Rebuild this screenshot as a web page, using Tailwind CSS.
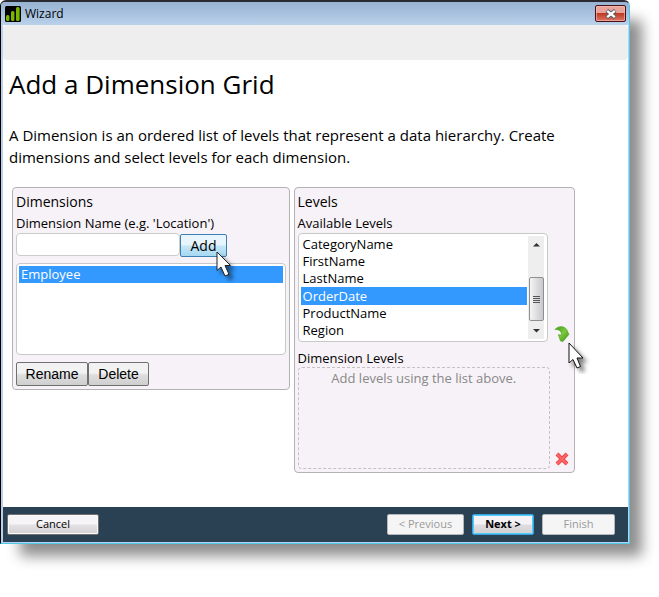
<!DOCTYPE html>
<html lang="en">
<head>
    <meta charset="UTF-8">
    <meta name="viewport" content="width=device-width, initial-scale=1.0">
    <title>Wizard</title>
    <script src="https://cdn.jsdelivr.net/npm/@tailwindcss/browser@4"></script>
</head>
<body class="bg-white min-h-screen flex flex-col pr-[29px] pb-[53px] font-['Open_Sans','Noto_Sans',sans-serif] text-black overflow-hidden">
    <div class="grow flex flex-col rounded-t-md border-l border-t-2 border-l-black border-t-[#2b2a33] border-r border-b border-r-[#4ccbe8] border-b-[#4ccbe8] bg-[#b9d1ee] shadow-[16px_16px_14px_-4px_rgba(0,0,0,0.45)]">
        <header class="h-[23px] shrink-0 flex items-center pl-1 pr-[3px] rounded-t bg-linear-to-b from-[#98b2d2] to-[#b9d1ea]">
            <svg class="w-4 h-4 shrink-0" viewBox="0 0 16 16">
                <rect width="16" height="16" rx="1.5" fill="#000"/>
                <rect x="1" y="9" width="3.4" height="6" rx="1.5" fill="#7ab800"/>
                <rect x="6" y="5" width="3.4" height="10" rx="1.5" fill="#7ab800"/>
                <rect x="11" y="1" width="3.6" height="14" rx="1.5" fill="#7ab800"/>
            </svg>
            <span class="ml-1 text-xs leading-4">Wizard</span>
            <button type="button" aria-label="Close" class="ml-auto w-[31px] h-[17px] flex items-center justify-center rounded-xs border border-[#43121c] bg-linear-to-b from-[#e8a49b] from-45% via-[#bf3a22] via-50% to-[#d97563] shadow-[inset_0_0_0_1px_rgba(255,190,180,0.6)]">
                <svg class="w-3 h-[10px]" viewBox="0 0 12 10" fill="none">
                    <path d="M1.8 1.4L10.2 8.6M10.2 1.4L1.8 8.6" stroke="#555a66" stroke-width="4"/>
                    <path d="M2.2 1.8L9.8 8.2M9.8 1.8L2.2 8.2" stroke="#fff" stroke-width="2.4"/>
                </svg>
            </button>
        </header>

        <div class="grow flex flex-col mx-[2px] mr-px mb-px bg-white">
            <div class="h-[35px] shrink-0 rounded bg-[#eeeeee]"></div>

            <main class="grow px-[6px] pt-[7px]">
                <h1 class="text-[26px] leading-[34px]">Add a Dimension Grid</h1>
                <p class="mt-[23px] text-[15px] leading-[22px]">A Dimension is an ordered list of levels that represent a data hierarchy. Create dimensions and select levels for each dimension.</p>

                <div class="mt-[19px] ml-[3px] mr-[47px] flex items-start gap-1">
                    <section class="flex-278 min-w-0 rounded border border-[#b5b2b5] bg-[#f7f2f7] px-[3px] pt-1 pb-[3px]">
                        <h2 class="text-sm leading-5">Dimensions</h2>
                        <label for="dimension-name" class="block mt-px text-[13px] leading-5">Dimension Name (e.g. 'Location')</label>
                        <div class="flex items-start">
                            <input id="dimension-name" type="text" class="w-[164px] h-[23px] px-1 text-[13px] rounded border border-[#cccccc] bg-white">
                            <div class="relative mt-px">
                                <button type="button" class="block w-[47px] h-[23px] rounded-xs border border-[#3c7fb1] text-sm leading-5 bg-linear-to-b from-[#e8f5fc] from-45% via-[#c4e5f6] via-55% to-[#a5d8f2]">Add</button>
                                <svg class="absolute left-9 top-[17px] w-6 h-8" viewBox="0 0 24 32">
                                    <path d="M1 1V19.5L5 16L9 25L13 23.3L9 14.5H14.5Z" fill="#fff" stroke="#222" class="drop-shadow-[4px_4px_2px_rgba(0,0,0,0.5)]"/>
                                </svg>
                            </div>
                        </div>
                        <ul role="listbox" aria-label="Dimensions" class="mt-[6px] h-[92px] rounded border border-[#c8c8c8] bg-white p-[2px]">
                            <li role="option" aria-selected="true" class="px-[2px] h-[17px] text-[13px] leading-[17px] bg-[#3399ff] text-white">Employee</li>
                        </ul>
                        <div class="mt-[7px] flex font-['Liberation_Sans',sans-serif] text-sm">
                            <button type="button" class="w-[72px] h-6 rounded-xs border border-[#707070] bg-linear-to-b from-[#f2f2f2] from-45% via-[#dddddd] via-55% to-[#cfcfcf]">Rename</button>
                            <button type="button" class="w-[61px] h-6 rounded-xs border border-[#707070] bg-linear-to-b from-[#f2f2f2] from-45% via-[#dddddd] via-55% to-[#cfcfcf]">Delete</button>
                        </div>
                    </section>

                    <section class="flex-281 min-w-0 rounded border border-[#b5b2b5] bg-[#f7f2f7] pl-[3px] pr-1 pt-1 pb-[3px]">
                        <h2 class="text-sm leading-5">Levels</h2>
                        <h3 class="mt-px text-[13px] leading-5">Available Levels</h3>
                        <div class="flex items-end gap-[6px]">
                            <div class="grow h-[109px] flex rounded border border-[#c8c8c8] bg-white p-[2px] pr-[3px]">
                                <ul role="listbox" aria-label="Available Levels" class="grow text-[13px] leading-[17px]">
                                    <li role="option" class="px-[2px]">CategoryName</li>
                                    <li role="option" class="px-[2px]">FirstName</li>
                                    <li role="option" class="px-[2px]">LastName</li>
                                    <li role="option" aria-selected="true" class="px-[2px] leading-[18px] bg-[#3399ff] text-white">OrderDate</li>
                                    <li role="option" class="px-[2px]">ProductName</li>
                                    <li role="option" class="px-[2px]">Region</li>
                                </ul>
                                <div class="w-4 ml-px flex flex-col items-center bg-[#eeeeee]">
                                    <svg class="w-4 h-[17px]" viewBox="0 0 16 17"><path d="M5 10.5L8.5 7L12 10.5Z" fill="#333"/></svg>
                                    <div class="grow"></div>
                                    <div class="w-[15px] h-[44px] flex flex-col items-center justify-center gap-px rounded-xs border border-[#8f8f8f] bg-linear-to-r from-[#f5f5f5] to-[#c8c8ce]">
                                        <span class="w-[7px] h-px bg-[#555]"></span>
                                        <span class="w-[7px] h-px bg-[#555]"></span>
                                        <span class="w-[7px] h-px bg-[#555]"></span>
                                        <span class="w-[7px] h-px bg-[#555]"></span>
                                    </div>
                                    <svg class="w-4 h-[18px]" viewBox="0 0 16 18"><path d="M5 8L8.5 11.5L12 8Z" fill="#333"/></svg>
                                </div>
                            </div>
                            <div class="relative w-4 shrink-0">
                                <button type="button" aria-label="Add level" class="block w-4 h-4">
                                    <svg class="w-4 h-4" viewBox="0 0 16 16">
                                        <defs>
                                            <linearGradient id="green" x1="0" y1="0" x2="1" y2="1">
                                                <stop offset="0" stop-color="#3f9a1c"/>
                                                <stop offset="0.5" stop-color="#7cc93c"/>
                                                <stop offset="1" stop-color="#3c8f14"/>
                                            </linearGradient>
                                        </defs>
                                        <path d="M1 3.5C4 -0.8 12.5 -0.5 13.8 6L15 8.3L9 15.5L6.5 15L4.3 8.7L7.5 9C8 6 5.5 3.2 1 3.5Z" fill="url(#green)" stroke="#4a9f20" stroke-width="0.6"/>
                                    </svg>
                                </button>
                                <svg class="absolute left-[14px] top-4 w-6 h-8" viewBox="0 0 24 32">
                                    <path d="M1 1V21L5 17.5L9 26L12.5 24.5L9 16H15Z" fill="#fff" stroke="#111" class="drop-shadow-[4px_4px_2px_rgba(0,0,0,0.5)]"/>
                                </svg>
                            </div>
                        </div>
                        <h3 class="mt-[7px] text-[13px] leading-[18px]">Dimension Levels</h3>
                        <div class="flex items-end gap-1">
                            <div class="grow h-[102px] rounded border border-dashed border-[#c4c1c4] pt-px text-center text-[13px] leading-[18px] text-[#888888]">Add levels using the list above.</div>
                            <button type="button" aria-label="Remove level" class="w-4 h-4 mb-[2px] shrink-0">
                                <svg class="w-4 h-4" viewBox="0 0 16 16" fill="none">
                                    <path d="M3 3L13 13M13 3L3 13" stroke="#f0464a" stroke-width="4"/>
                                    <path d="M3 3L13 13M13 3L3 13" stroke="#fb6668" stroke-width="2"/>
                                </svg>
                            </button>
                        </div>
                    </section>
                </div>
            </main>

            <footer class="h-[35px] shrink-0 flex items-center gap-2 pl-1 pr-[13px] bg-[#2a4053] text-[11px]">
                <button type="button" class="w-[92px] h-[21px] rounded-xs border border-[#707070] bg-linear-to-b from-[#f6f4f6] from-45% via-[#e3e1e3] via-55% to-[#d2d0d2] shadow-[inset_0_0_0_1px_#fafafa]">Cancel</button>
                <button type="button" disabled class="ml-auto w-[77px] h-[21px] rounded-xs border border-[#b4b8bc] bg-[#f5f5f5] text-[#9a9a9a]">&lt; Previous</button>
                <button type="button" class="w-[62px] h-[21px] rounded-xs border border-[#3c9fe0] bg-linear-to-b from-[#f4f2f4] from-45% via-[#dedcde] via-55% to-[#d2d0d2] font-bold shadow-[inset_0_0_0_1px_#4fcdf8]">Next &gt;</button>
                <button type="button" disabled class="w-[73px] h-[21px] rounded-xs border border-[#b4b8bc] bg-[#f5f5f5] text-[#9a9a9a]">Finish</button>
            </footer>
        </div>
    </div>
</body>
</html>
